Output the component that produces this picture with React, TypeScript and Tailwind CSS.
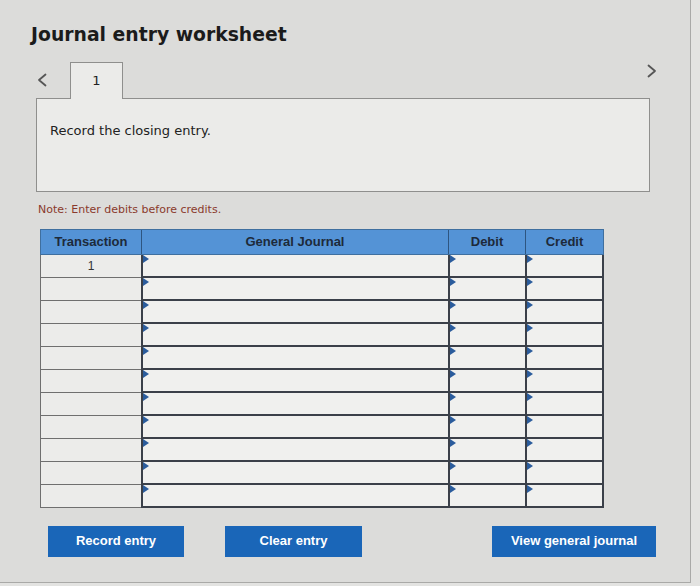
import React from 'react';

const ROWS = 11;

function Marker() {
  return (
    <div className="absolute left-0 top-0 w-0 h-0 border-t-[4px] border-b-[4px] border-l-[6px] border-t-transparent border-b-transparent border-l-[#2b5c9c]" />
  );
}

function InputCell({ w }: { w: string }) {
  return (
    <div className={`${w} relative h-full border-l-2 border-b-2 border-[#3b4049] bg-[#f0f0ee]`}>
      <Marker />
    </div>
  );
}

function Chevron({ dir }: { dir: 'left' | 'right' }) {
  return (
    <svg width="10" height="14" viewBox="0 0 10 14" fill="none" stroke="#555" strokeWidth="1.8" strokeLinecap="round" strokeLinejoin="round">
      {dir === 'left' ? <polyline points="8.5,1.5 2,7 8.5,12.5" /> : <polyline points="1.5,1.5 8,7 1.5,12.5" />}
    </svg>
  );
}

export default function App() {
  return (
    <div className="w-[700px] h-[586px] bg-[#e3e3e1] overflow-hidden" style={{ fontFamily: '"DejaVu Sans", Verdana, sans-serif' }}>
      <div className="w-[691px] h-[583px] bg-[#dcdcda] border-r border-b border-[#a9a9a7]">
        {/* Title */}
        <h1 className="pt-[22px] pl-[31px] text-[18.8px] font-bold text-[#1b1b1b] leading-[26px]">Journal entry worksheet</h1>

        {/* Tabs */}
        <div className="mt-[14px] flex items-start">
          <div className="ml-[37px] mt-[11px]">
            <Chevron dir="left" />
          </div>
          <div className="ml-[23px] w-[53px] h-[37px] bg-[#ebebe9] border border-b-0 border-[#8f8f8d] flex items-center justify-center text-[13px] text-[#222] relative z-10">
            1
          </div>
          <div className="ml-auto mr-[33px] mt-[2px]">
            <Chevron dir="right" />
          </div>
        </div>

        {/* Question box */}
        <div className="-mt-px ml-[36px] w-[614px] h-[94px] bg-[#ebebe9] border border-[#8f8f8d] pl-[13px] pt-[22px] text-[13px] text-[#222]">
          Record the closing entry.
        </div>

        <p className="ml-[38px] mt-[10px] text-[11px] text-[#8a3a2c]">Note: Enter debits before credits.</p>

        {/* Table */}
        <div className="ml-[40px] mt-[10px] w-[564px]" style={{ fontFamily: '"Liberation Sans", Arial, sans-serif' }}>
          <div className="flex h-[26px] bg-[#5493d6] border border-[#3f6f9f] text-[13px] font-bold text-[#1d2a3a]">
            <div className="w-[101px] flex items-center justify-center border-r border-[#2e5580]">Transaction</div>
            <div className="w-[307px] flex items-center justify-center border-r border-[#2e5580]">General Journal</div>
            <div className="w-[77px] flex items-center justify-center border-r border-[#2e5580]">Debit</div>
            <div className="flex-1 flex items-center justify-center">Credit</div>
          </div>
          <div className="border-r-2 border-[#3b4049]">
            {Array.from({ length: ROWS }).map((_, i) => (
              <div key={i} className="flex h-[23px]">
                <div className="w-[101px] h-full border-l border-b border-[#6f6f6f] bg-[#ececea] flex items-center justify-center text-[12px] text-[#333]">
                  {i === 0 ? '1' : ''}
                </div>
                <InputCell w="w-[307px]" />
                <InputCell w="w-[77px]" />
                <InputCell w="flex-1" />
              </div>
            ))}
          </div>
        </div>

        {/* Buttons */}
        <div className="mt-[18px] flex items-center" style={{ fontFamily: '"Liberation Sans", Arial, sans-serif' }}>
          <button className="ml-[48px] w-[136px] h-[31px] bg-[#1a66b8] text-white text-[13px] font-bold">Record entry</button>
          <button className="ml-[41px] w-[137px] h-[31px] bg-[#1a66b8] text-white text-[13px] font-bold">Clear entry</button>
          <button className="ml-[130px] w-[164px] h-[31px] bg-[#1a66b8] text-white text-[13px] font-bold">View general journal</button>
        </div>
      </div>
    </div>
  );
}
